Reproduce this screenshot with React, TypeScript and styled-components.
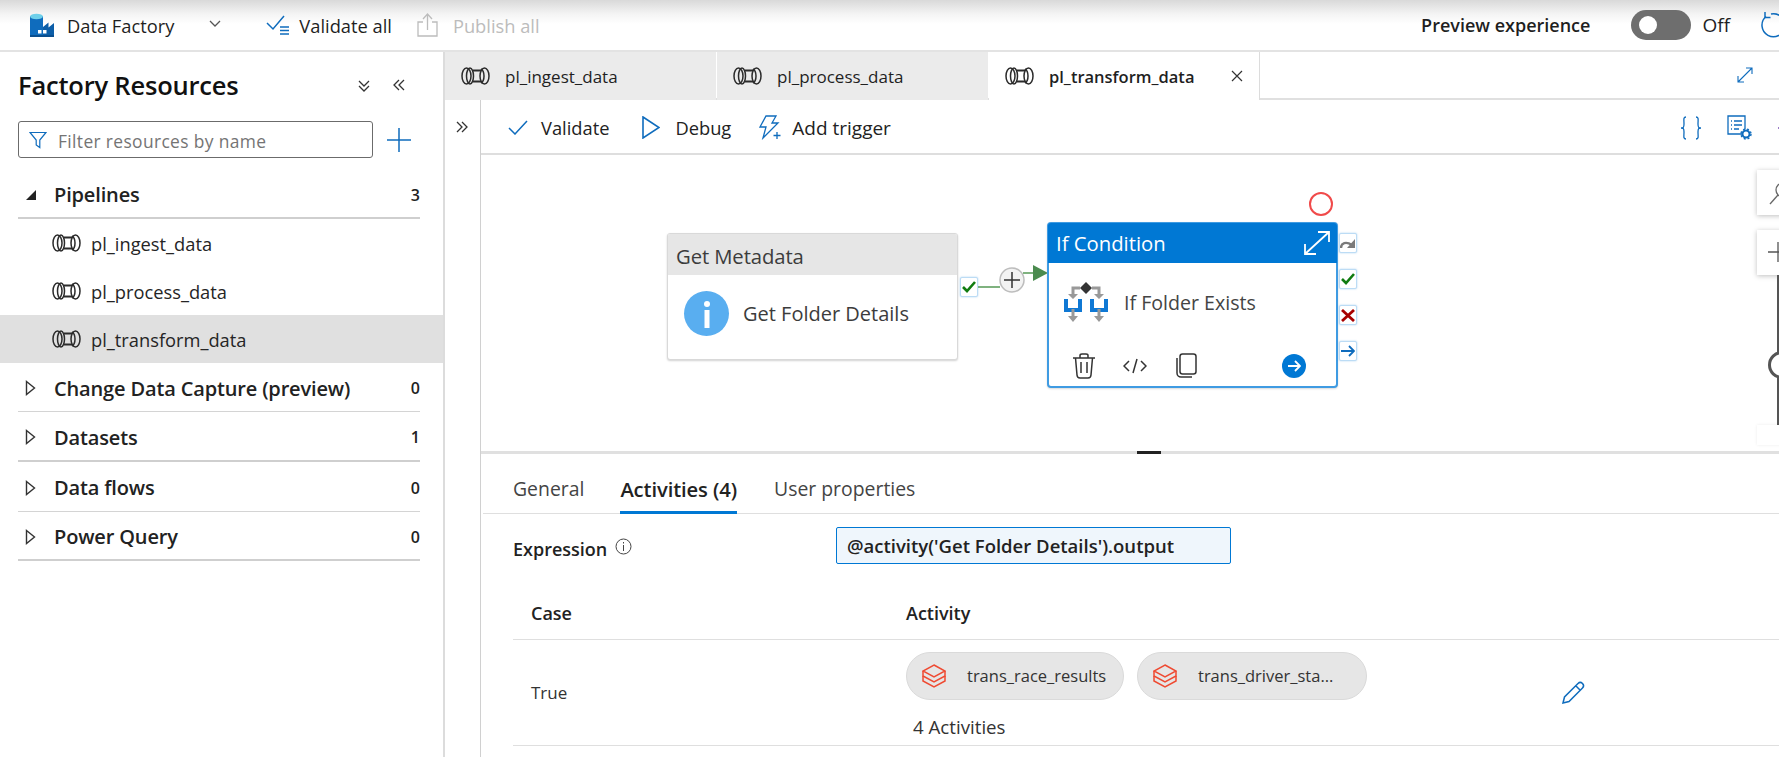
import React from "react";
import styled, { createGlobalStyle } from "styled-components";

const Global = createGlobalStyle`
  html, body { margin: 0; padding: 0; background: #fff; }
  body { font-family: "Open Sans", "Noto Sans", "Liberation Sans", sans-serif; color: #1f1f1f; }
  * { box-sizing: border-box; }
  svg { display: block; flex: none; }
`;

const Page = styled.div`
  width: 1779px; height: 757px; overflow: hidden; display: flex; flex-direction: column;
`;
const TopBar = styled.header`
  height: 52px; flex: none; display: flex; align-items: center; padding-left: 30px; font-size: 18.3px;
  border-bottom: 2px solid #e3e3e3;
  background: linear-gradient(#d9d9d9 0, #f4f4f4 14px, #fff 24px);
`;
const TopItem = styled.div<{ $gap?: number; $ml?: number; $disabled?: boolean }>`
  display: flex; align-items: center; gap: ${p => p.$gap ?? 12}px; margin-left: ${p => p.$ml ?? 0}px;
  color: ${p => (p.$disabled ? "#bcbcbc" : "#1f1f1f")}; white-space: nowrap;
`;
const PreviewLabel = styled.span`
  margin-left: auto; font-weight: 600; font-size: 18px; color: #1f1f1f;
`;
const Toggle = styled.div`
  width: 60px; height: 30px; border-radius: 15px; background: #6e6e6e; margin-left: 41px; padding: 6px 8px;
  &::before { content: ""; display: block; width: 18px; height: 18px; border-radius: 50%; background: #fff; }
`;
const OffText = styled.span` margin-left: 11px; font-size: 19px; `;
const Refresh = styled.div` margin-left: 28px; margin-right: -5px; `;

const Body = styled.div` flex: 1; display: flex; min-height: 0; `;
const Sidebar = styled.aside`
  width: 445px; flex: none; border-right: 2px solid #dcdcdc; display: flex; flex-direction: column;
`;
const SideHead = styled.div`
  height: 69px; display: flex; align-items: center; padding: 0 36px 3px 18px;
`;
const SideTitle = styled.h1`
  margin: 0; font-size: 25.5px; font-weight: 600; color: #111; flex: 1; white-space: nowrap; letter-spacing: -0.2px;
`;
const SideHeadIcons = styled.div` display: flex; align-items: center; gap: 22px; `;
const FilterRow = styled.div`
  display: flex; align-items: center; padding: 0 32px 0 18px; gap: 14px; height: 37px; 
`;
const FilterBox = styled.div`
  flex: 1; height: 37px; border: 1px solid #6b6b6b; border-radius: 3px; display: flex; align-items: center;
  padding: 3px 0 0 10px; gap: 11px; color: #747474; font-size: 17.4px; letter-spacing: 0.36px; white-space: nowrap;
  svg { margin-top: -3px; }
`;
const List = styled.div` margin-top: 12px; `;
const GroupRow = styled.div<{ $heavy?: boolean; $h?: number }>`
  height: ${p => p.$h ?? 49}px; margin: 0 23px 0 18px; display: flex; align-items: center; gap: 17px; padding: 2px 0 0 7px;
  border-bottom: ${p => (p.$heavy ? "2px solid #cfcfcf" : "1px solid #d4d4d4")};
  font-size: 20px; font-weight: 600; color: #222;
`;
const GroupName = styled.span` flex: 1; white-space: nowrap; letter-spacing: -0.15px; `;
const Count = styled.span` font-size: 16px; font-weight: 600; `;
const PipelineRow = styled.div<{ $active?: boolean }>`
  height: 48px; display: flex; align-items: center; padding-left: 52px; gap: 10px; font-size: 18.3px; color: #252525;
  background: ${p => (p.$active ? "#e0e0e0" : "transparent")};
`;

const Main = styled.main` flex: 1; min-width: 0; display: flex; flex-direction: column; `;
const TabStrip = styled.div`
  height: 48px; flex: none; display: flex; align-items: stretch; border-bottom: 2px solid #e0e0e0;
`;
const Tab = styled.div<{ $active?: boolean }>`
  width: 271px; margin-right: 1px; display: flex; align-items: center; gap: 15px; padding-left: 16px;
  font-size: ${p => (p.$active ? 16.5 : 17)}px;
  white-space: nowrap;
  background: ${p => (p.$active ? "#fff" : "#ebebeb")};
  font-weight: ${p => (p.$active ? 600 : 400)};
  border-right: ${p => (p.$active ? "1px solid #dcdcdc" : "none")};
  margin-bottom: -2px;
`;
const TabClose = styled.span`
  margin-left: auto; margin-right: 16px; display: flex;
`;
const StripExpand = styled.div` margin-left: auto; margin-right: 26px; align-self: center; `;

const Work = styled.div` flex: 1; display: flex; min-height: 0; `;
const CollapseCol = styled.div`
  width: 36px; flex: none; border-right: 1px solid #d0d0d0; padding: 20px 0 0 9px;
`;
const Content = styled.div` flex: 1; min-width: 0; display: flex; flex-direction: column; overflow: hidden; `;
const Toolbar = styled.div`
  height: 55px; flex: none; display: flex; align-items: center; padding: 2px 0 0 27px; border-bottom: 2px solid #dedede;
  font-size: 18.3px; color: #222;
`;
const ToolItem = styled.div<{ $ml?: number; $gap?: number; $size?: number }>`
  display: flex; align-items: center; gap: ${p => p.$gap ?? 13}px; margin-left: ${p => p.$ml ?? 0}px; white-space: nowrap;
  font-size: ${p => p.$size ?? 18.3}px;
`;
const ToolRight = styled.div`
  margin-left: auto; margin-right: -18px; display: flex; align-items: center; gap: 25px;
`;

const Canvas = styled.section` height: 296px; flex: none; position: relative; overflow: hidden; `;
const Placed = styled.div<{ $x: number; $y: number }>`
  position: absolute; left: ${p => p.$x}px; top: ${p => p.$y}px;
`;
const MetaCard = styled(Placed)`
  width: 291px; height: 127px; border: 1px solid #d9d9d9; border-radius: 3px; background: #fff;
  box-shadow: 0 1px 2px rgba(0,0,0,.18); overflow: hidden;
`;
const MetaHead = styled.div`
  height: 41px; background: #e6e6e6; font-size: 20.3px; color: #3c3c3c; display: flex; align-items: center; padding: 2px 0 0 8px;
  letter-spacing: -0.1px;
`;
const MetaBody = styled.div`
  display: flex; align-items: center; gap: 14px; padding: 16px 0 0 16px; font-size: 20px; color: #3c3c3c;
`;
const InfoDisc = styled.div`
  width: 45px; height: 45px; border-radius: 50%; background: #59aef0; display: flex; align-items: center; justify-content: center;
`;
const Port = styled.div`
  width: 18px; height: 20px; background: #fff; border: 1px solid #bcdcf5; border-radius: 2px; display: flex; align-items: center; justify-content: center;
  box-shadow: 0 0 2px rgba(0,120,212,.35);
`;
const IfCard = styled(Placed)`
  width: 291px; height: 166px; border: 2px solid #3f9be2; border-radius: 4px; background: #fff; display: flex; flex-direction: column;
  box-shadow: 0 1px 2px rgba(0,0,0,.15);
`;
const IfHead = styled.div`
  height: 40px; flex: none; margin: -1px -1px 0; border-radius: 3px 3px 0 0; background: #0078d4; color: #fff; font-size: 20.3px; display: flex; align-items: center;
  justify-content: space-between; padding: 0 6px 0 8px;
`;
const IfBody = styled.div`
  height: 60px; display: flex; align-items: center; gap: 16px; padding: 18px 0 0 15px; font-size: 19.6px; color: #444;
`;
const IfActions = styled.div`
  margin-top: auto; height: 46px; display: flex; align-items: center; padding: 5px 0 0 23px;
`;
const ActionSlot = styled.div<{ $w: number }>` width: ${p => p.$w}px; `;
const ArrowDisc = styled.div`
  width: 24px; height: 24px; border-radius: 50%; background: #0078d4; margin-left: 73px; display: flex; align-items: center; justify-content: center;
`;
const PortStack = styled(Placed)` display: flex; flex-direction: column; gap: 16px; `;
const BreakPoint = styled(Placed)`
  width: 24px; height: 24px; border-radius: 50%; border: 2px solid #f04a4a; background: #fff;
`;
const ZoomBox = styled(Placed)<{ $h: number; $flat?: boolean }>`
  width: 40px; height: ${p => p.$h}px; background: #fff; padding: 12px 0 0 11px;
  box-shadow: ${p => (p.$flat ? "0 0 3px rgba(0,0,0,.08)" : "0 1px 5px rgba(0,0,0,.25)")};
`;
const SliderLine = styled(Placed)`
  width: 3px; height: 150px; background: #555;
  &::after { content: ""; position: absolute; left: -9px; top: 76px; width: 22px; height: 22px; border: 3px solid #555; border-radius: 50%; background: #fff; }
`;

const Splitter = styled.div`
  height: 3px; flex: none; background: #e0e0e0; padding-left: 656px;
  &::before { content: ""; display: block; height: 3px; width: 24px; background: #222; }
`;
const Lower = styled.section` flex: 1; min-height: 0; `;
const LowerTabs = styled.div`
  height: 60px; padding-left: 30px; display: flex; align-items: flex-end; gap: 36px; border-bottom: 1px solid #dfdfdf;
  margin-left: 2px; font-size: 19.2px; color: #444;
`;
const LowerTab = styled.div<{ $active?: boolean }>`
  height: 47px; display: flex; align-items: flex-start; padding-top: 8px; margin-bottom: -1px;
  font-weight: ${p => (p.$active ? 600 : 400)}; color: ${p => (p.$active ? "#222" : "#444")};
  font-size: ${p => (p.$active ? 20.2 : 19.4)}px; letter-spacing: ${p => (p.$active ? "-0.1px" : "0")};
  margin-right: ${p => (p.$active ? 1 : 0)}px;
  border-bottom: 3px solid ${p => (p.$active ? "#0078d4" : "transparent")};
`;
const ExprRow = styled.div`
  padding: 13px 0 0 32px; display: flex; align-items: flex-start;
`;
const ExprLabel = styled.div`
  width: 323px; height: 36px; padding-top: 8px; display: flex; align-items: center; gap: 8px; font-size: 18px; font-weight: 600; color: #222; white-space: nowrap;
`;
const ExprInput = styled.div`
  width: 395px; height: 37px; background: #eff6fc; border: 1px solid #0078d4; border-radius: 2px; padding-left: 10px; font-size: 18.5px; font-weight: 600;
  color: #222; display: flex; align-items: center; white-space: nowrap;
`;
const Row = styled.div<{ $h: number }>`
  margin-left: 32px; height: ${p => p.$h}px; display: grid; grid-template-columns: 393px 655px 1fr; border-bottom: 1px solid #dfdfdf; align-items: center; font-size: 17px;
`;
const HeadCell = styled.div`
  font-weight: 600; color: #222; padding-top: 23px; font-size: 18px;
  &:first-child { padding-left: 18px; }
`;
const Cell = styled.div` color: #333; padding-left: 18px; `;
const ActivityCell = styled.div` align-self: start; padding-top: 12px; `;
const Chips = styled.div` display: flex; gap: 13px; `;
const Chip = styled.div<{ $w: number }>`
  width: ${p => p.$w}px; height: 48px; border-radius: 24px; background: #e6e6e6; border: 1px solid #dadada; display: flex; align-items: center; gap: 21px; padding: 0 0 2px 15px;
  font-size: 16.5px; color: #333; white-space: nowrap;
  svg { margin-top: 2px; }
`;
const ChipCount = styled.div` margin: 14px 0 0 7px; font-size: 18.7px; color: #333; `;

const PipeIcon = () => (
  <svg width="29" height="18" viewBox="0 0 29 18" fill="none" stroke="#2b2b2b" strokeWidth="1.500">
    <ellipse cx="5.500" cy="9" rx="4.500" ry="8" />
    <ellipse cx="9" cy="9" rx="3.500" ry="8" />
    <path d="M12 3.500h8M12 14.500h8" strokeWidth="1.800" />
    <ellipse cx="23.500" cy="9" rx="4.500" ry="8" />
    <path d="M20 1.800c2.200 1.400 3 4 3 7.200s-.8 5.800-3 7.200" />
  </svg>
);
const DataFactoryIcon = () => (
  <svg width="24" height="24" viewBox="0 0 24 24">
    <rect x="0" y="3" width="13" height="20" fill="#0f6cbd" />
    <path d="M13 23h11V10l-5.500 4.500V9.500L13 14z" fill="#0c5ea8" />
    <rect x="0" y="22" width="24" height="2" fill="#0a4f8f" />
    <ellipse cx="6.500" cy="3.500" rx="6.500" ry="2.800" fill="#6fd0ea" />
    <path d="M8 17h3.500v3.500H8zM13 17h3.500v3.500H13z" fill="#fff" />
  </svg>
);
const Chev = ({ rot = 0, color = "#333", double = false }: { rot?: number; color?: string; double?: boolean }) => (
  <svg width="14" height="14" viewBox="0 0 14 14" fill="none" stroke={color} strokeWidth="1.300" style={{ transform: `rotate(${rot}deg)` }}>
    <path d="M3 2l5 5-5 5" />
    {double && <path d="M8 2l5 5-5 5" />}
  </svg>
);
const Pipelines = ["pl_ingest_data", "pl_process_data", "pl_transform_data"];
const Groups = [
  { name: "Change Data Capture (preview)", count: 0, h: 49 },
  { name: "Datasets", count: 1, heavy: true, h: 50 },
  { name: "Data flows", count: 0, h: 50 },
  { name: "Power Query", count: 0, heavy: true, h: 49 },
];
const Caret = ({ open }: { open?: boolean }) =>
  open ? (
    <svg width="12" height="12" viewBox="0 0 12 12"><path d="M11 1v10H1z" fill="#222" /></svg>
  ) : (
    <svg width="12" height="16" viewBox="0 0 12 16" fill="none" stroke="#333" strokeWidth="1.400"><path d="M1.500 1.500L9.500 8l-8 6.500z" /></svg>
  );
const LayersIcon = () => (
  <svg width="24" height="24" viewBox="0 0 24 24" fill="none" stroke="#ef4a32" strokeWidth="1.500">
    <path d="M12 1l11 6-11 6L1 7z" />
    <path d="M1 7v5l11 6 11-6V7" />
    <path d="M1 12v5l11 6 11-6v-5" />
  </svg>
);

export default function App() {
  return (
    <Page>
      <Global />
      <TopBar>
        <TopItem $gap={13}><DataFactoryIcon /><span>Data Factory</span></TopItem>
        <TopItem $ml={34}><Chev rot={90} color="#555" /></TopItem>
        <TopItem $ml={44} $gap={9}>
          <svg width="24" height="22" viewBox="0 0 24 22" fill="none" stroke="#0f6cbd" strokeWidth="1.500"><path d="M1 9l6 6L18 2" /><path d="M14 13h9M14 16.500h9M14 20h9" /></svg>
          <span>Validate all</span>
        </TopItem>
        <TopItem $ml={25} $gap={15} $disabled>
          <svg width="21" height="24" viewBox="0 0 21 24" fill="none" stroke="#bcbcbc" strokeWidth="1.300"><path d="M6 9H1v14h19V9h-5M10.500 17V1M6 6l4.500-5L15 6" /></svg>
          <span>Publish all</span>
        </TopItem>
        <PreviewLabel>Preview experience</PreviewLabel>
        <Toggle />
        <OffText>Off</OffText>
        <Refresh>
          <svg width="26" height="26" viewBox="0 0 26 26" fill="none" stroke="#0f6cbd" strokeWidth="1.500"><path d="M8 4.500A11.500 11.500 0 1 0 13 2" /><path d="M7 0v5.500h5.500" /></svg>
        </Refresh>
      </TopBar>
      <Body>
        <Sidebar>
          <SideHead>
            <SideTitle>Factory Resources</SideTitle>
            <SideHeadIcons><Chev rot={90} double /><Chev rot={180} double /></SideHeadIcons>
          </SideHead>
          <FilterRow>
            <FilterBox>
              <svg width="18" height="18" viewBox="0 0 18 18" fill="none" stroke="#0f6cbd" strokeWidth="1.200"><path d="M1 1.500h16l-6.200 7.500v7.500l-3.600-2.500V9z" /></svg>
              <span>Filter resources by name</span>
            </FilterBox>
            <svg width="24" height="24" viewBox="0 0 24 24" fill="none" stroke="#0f6cbd" strokeWidth="1.500"><path d="M12 0v24M0 12h24" /></svg>
          </FilterRow>
          <List>
            <GroupRow $heavy><Caret open /><GroupName>Pipelines</GroupName><Count>3</Count></GroupRow>
            {Pipelines.map((p, i) => (
              <PipelineRow key={p} $active={i === 2}><PipeIcon /><span>{p}</span></PipelineRow>
            ))}
            {Groups.map(g => (
              <GroupRow key={g.name} $heavy={g.heavy} $h={g.h}><Caret /><GroupName>{g.name}</GroupName><Count>{g.count}</Count></GroupRow>
            ))}
          </List>
        </Sidebar>
        <Main>
          <TabStrip>
            {Pipelines.map((p, i) => (
              <Tab key={p} $active={i === 2}>
                <PipeIcon /><span>{p}</span>
                {i === 2 && (
                  <TabClose>
                    <svg width="12" height="12" viewBox="0 0 12 12" stroke="#333" strokeWidth="1.200"><path d="M1 1l10 10M11 1L1 11" /></svg>
                  </TabClose>
                )}
              </Tab>
            ))}
            <StripExpand>
              <svg width="16" height="16" viewBox="0 0 16 16" fill="none" stroke="#0f6cbd" strokeWidth="1.100"><path d="M1 15L15 1M9 1h6v6M1 9v6h6" /></svg>
            </StripExpand>
          </TabStrip>
          <Work>
            <CollapseCol><Chev double /></CollapseCol>
            <Content>
              <Toolbar>
                <ToolItem>
                  <svg width="20" height="15" viewBox="0 0 20 15" fill="none" stroke="#0f6cbd" strokeWidth="1.500"><path d="M1 8l6 6L19 1" /></svg>
                  <span>Validate</span>
                </ToolItem>
                <ToolItem $ml={33} $gap={15}>
                  <svg width="18" height="23" viewBox="0 0 18 23" fill="none" stroke="#0f6cbd" strokeWidth="1.600"><path d="M1 1l16 10.500L1 22z" /></svg>
                  <span>Debug</span>
                </ToolItem>
                <ToolItem $ml={27} $gap={10} $size={19}>
                  <svg width="24" height="25" viewBox="0 0 24 25" fill="none" stroke="#0f6cbd" strokeWidth="1.300"><path d="M8 1h10l-4 7h6L5 23l3-11H2z" /><path d="M19 17v7M15.500 20.500h7" /></svg>
                  <span>Add trigger</span>
                </ToolItem>
                <ToolRight>
                  <svg width="22" height="24" viewBox="0 0 22 24" fill="none" stroke="#0f6cbd" strokeWidth="1.300"><path d="M6 1C3 1 4 4 4 8s-1 4-3 4c2 0 3 0 3 4s-1 7 2 7M16 1c3 0 2 3 2 7s1 4 3 4c-2 0-3 0-3 4s1 7-2 7" /></svg>
                  <svg width="25" height="25" viewBox="0 0 25 25" fill="none" stroke="#0f6cbd" strokeWidth="1.300"><path d="M15 19H1V1h17v13M4 6h1M7 6h8M4 10h1M7 10h8M4 14h1M7 14h5" /><circle cx="19" cy="19" r="3.500" strokeWidth="2" /><circle cx="19" cy="19" r="5" strokeDasharray="2 2" strokeWidth="1.400" /></svg>
                  <svg width="20" height="20" viewBox="0 0 20 20" fill="none" stroke="#7a4fb5" strokeWidth="1.500"><path d="M1 10h18" /></svg>
                </ToolRight>
              </Toolbar>
              <Canvas>
                <MetaCard $x={186} $y={78}>
                  <MetaHead>Get Metadata</MetaHead>
                  <MetaBody>
                    <InfoDisc>
                      <svg width="8" height="28" viewBox="0 0 8 28" fill="#fff"><circle cx="4" cy="4" r="3" /><rect x="1.500" y="10" width="5" height="18" /></svg>
                    </InfoDisc>
                    <span>Get Folder Details</span>
                  </MetaBody>
                </MetaCard>
                <Placed $x={479} $y={122}>
                  <Port><svg width="14" height="12" viewBox="0 0 14 12" fill="none" stroke="#107c10" strokeWidth="2.600"><path d="M1 6l4 4 8-9" /></svg></Port>
                </Placed>
                <Placed $x={497} $y={108}>
                  <svg width="72" height="36" viewBox="0 0 72 36" fill="none">
                    <path d="M0 24h22" stroke="#7fb27f" strokeWidth="2" />
                    <path d="M45 10h12" stroke="#7fb27f" strokeWidth="2" />
                    <path d="M55 2l15 8-15 8z" fill="#4b8b4f" />
                    <circle cx="34" cy="17" r="12" fill="#f3f3f3" stroke="#bdbdbd" strokeWidth="1.500" />
                    <path d="M34 9v16M26 17h16" stroke="#333" strokeWidth="1.500" />
                  </svg>
                </Placed>
                <IfCard $x={566} $y={67}>
                  <IfHead>
                    <span>If Condition</span>
                    <svg width="28" height="26" viewBox="0 0 28 26" fill="none" stroke="#fff" strokeWidth="1.800"><path d="M2 24L26 2M15 2h11v10M2 14v10h11" /></svg>
                  </IfHead>
                  <IfBody>
                    <svg width="44" height="43" viewBox="0 0 44 43" fill="none">
                      <path d="M22 1l6 6-6 6-6-6z" fill="#333" />
                      <path d="M16 7H9v9M28 7h7v9" stroke="#999" strokeWidth="3" />
                      <path d="M4 13h10l-5 5zM30 13h10l-5 5z" fill="#999" />
                      <path d="M2 18v11h14V18M28 18v11h14V18" stroke="#0f78d4" strokeWidth="4" />
                      <path d="M9 28v8M35 28v8" stroke="#999" strokeWidth="3" />
                      <path d="M4 35h10l-5 6zM30 35h10l-5 6z" fill="#999" />
                    </svg>
                    <span>If Folder Exists</span>
                  </IfBody>
                  <IfActions>
                    <ActionSlot $w={51}>
                      <svg width="24" height="26" viewBox="0 0 24 26" fill="none" stroke="#333" strokeWidth="1.500"><path d="M1 5h22M8 5V2.500C8 1.500 9 1 10 1h4c1 0 2 .5 2 1.500V5M3.500 5l1.500 17c.1 1.500 1 3 3 3h8c2 0 2.900-1.500 3-3l1.500-17M9 9v11M15 9v11" /></svg>
                    </ActionSlot>
                    <ActionSlot $w={52}>
                      <svg width="24" height="16" viewBox="0 0 24 16" fill="none" stroke="#333" strokeWidth="1.500"><path d="M6 3L1 8l5 5M18 3l5 5-5 5M14 1l-4 14" /></svg>
                    </ActionSlot>
                    <ActionSlot $w={34}>
                      <svg width="22" height="25" viewBox="0 0 22 25" fill="none" stroke="#333" strokeWidth="1.500"><rect x="5" y="1" width="16" height="20" rx="2.500" /><path d="M2 5v15c0 2.500 2 4 4 4h11" /></svg>
                    </ActionSlot>
                    <ArrowDisc>
                      <svg width="14" height="14" viewBox="0 0 14 14" fill="none" stroke="#fff" strokeWidth="1.800"><path d="M1 7h12M8 2l5 5-5 5" /></svg>
                    </ArrowDisc>
                  </IfActions>
                </IfCard>
                <BreakPoint $x={828} $y={37} />
                <PortStack $x={858} $y={78}>
                  <Port><svg width="16" height="11" viewBox="0 0 16 11" fill="none" stroke="#7a7a7a" strokeWidth="2.400"><path d="M1 10c0-5 5-7 11-3" /><path d="M15 1v9H7z" fill="#7a7a7a" stroke="none" /></svg></Port>
                  <Port><svg width="14" height="12" viewBox="0 0 14 12" fill="none" stroke="#107c10" strokeWidth="2.600"><path d="M1 6l4 4 8-9" /></svg></Port>
                  <Port><svg width="14" height="13" viewBox="0 0 14 13" fill="none" stroke="#a80000" strokeWidth="2.800"><path d="M1 1l12 11M13 1L1 12" /></svg></Port>
                  <Port><svg width="14" height="12" viewBox="0 0 14 12" fill="none" stroke="#0f6cbd" strokeWidth="1.800"><path d="M0 6h13M8 1l5 5-5 5" /></svg></Port>
                </PortStack>
                <ZoomBox $x={1276} $y={15} $h={45}>
                  <svg width="24" height="24" viewBox="0 0 24 24" fill="none" stroke="#666" strokeWidth="1.300"><circle cx="15" cy="8" r="7" /><path d="M10 13L2 22" /></svg>
                </ZoomBox>
                <ZoomBox $x={1276} $y={75} $h={45}>
                  <svg width="20" height="20" viewBox="0 0 20 20" fill="none" stroke="#555" strokeWidth="1.300"><path d="M10 0v20M0 10h20" /></svg>
                </ZoomBox>
                <SliderLine $x={1296} $y={120} />
                <ZoomBox $x={1276} $y={270} $h={20} $flat />
              </Canvas>
              <Splitter />
              <Lower>
                <LowerTabs>
                  <LowerTab>General</LowerTab>
                  <LowerTab $active>Activities (4)</LowerTab>
                  <LowerTab>User properties</LowerTab>
                </LowerTabs>
                <ExprRow>
                  <ExprLabel>
                    <span>Expression</span>
                    <svg width="17" height="17" viewBox="0 0 17 17" fill="none" stroke="#444" strokeWidth="1" style={{ marginTop: -6 }}><circle cx="8.500" cy="8.500" r="7.500" /><path d="M8.500 7v6M8.500 4v1.500" /></svg>
                  </ExprLabel>
                  <ExprInput>@activity('Get Folder Details').output</ExprInput>
                </ExprRow>
                <Row $h={76}>
                  <HeadCell>Case</HeadCell>
                  <HeadCell>Activity</HeadCell>
                  <span />
                </Row>
                <Row $h={106}>
                  <Cell>True</Cell>
                  <ActivityCell>
                    <Chips>
                      <Chip $w={218}><LayersIcon /><span>trans_race_results</span></Chip>
                      <Chip $w={230}><LayersIcon /><span>trans_driver_sta…</span></Chip>
                    </Chips>
                    <ChipCount>4 Activities</ChipCount>
                  </ActivityCell>
                  <svg width="25" height="25" viewBox="0 0 25 25" fill="none" stroke="#0f6cbd" strokeWidth="1.500"><path d="M2 23l1.500-6L17 3.500c1.500-1.500 3-1.500 4.500 0s1.500 3 0 4.500L8 21.500zM15 6l4.500 4.500" /></svg>
                </Row>
              </Lower>
            </Content>
          </Work>
        </Main>
      </Body>
    </Page>
  );
}
